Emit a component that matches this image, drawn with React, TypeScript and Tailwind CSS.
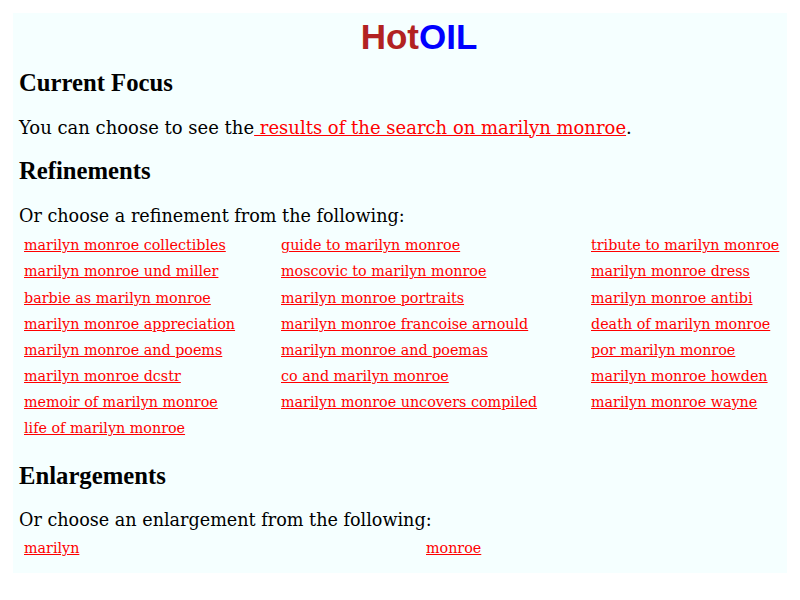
import React from "react";

const refinements: string[][] = [
  ["marilyn monroe collectibles", "guide to marilyn monroe", "tribute to marilyn monroe"],
  ["marilyn monroe und miller", "moscovic to marilyn monroe", "marilyn monroe dress"],
  ["barbie as marilyn monroe", "marilyn monroe portraits", "marilyn monroe antibi"],
  ["marilyn monroe appreciation", "marilyn monroe francoise arnould", "death of marilyn monroe"],
  ["marilyn monroe and poems", "marilyn monroe and poemas", "por marilyn monroe"],
  ["marilyn monroe dcstr", "co and marilyn monroe", "marilyn monroe howden"],
  ["memoir of marilyn monroe", "marilyn monroe uncovers compiled", "marilyn monroe wayne"],
  ["life of marilyn monroe", "", ""],
];

const serif = "font-['DejaVu_Serif',serif]";

function Heading({ children, className = "" }: { children: React.ReactNode; className?: string }) {
  return (
    <h2
      className={`h-[44px] flex items-center text-[24.7px] font-bold text-black font-['Liberation_Serif',serif] ${className}`}
    >
      {children}
    </h2>
  );
}

function RefLink({ label }: { label: string }) {
  if (!label) return <span />;
  return (
    <a href="#" className="text-[#ff0000] underline">
      {label}
    </a>
  );
}

export default function App() {
  return (
    <div className="bg-white min-h-[600px] p-[13px]">
      <div className="bg-[#f5ffff] h-[560px] px-[6px]">
        {/* Logo */}
        <div className="h-[48px] pt-[6px] pl-[38px] flex items-start justify-center">
          <h1 className="text-[35px] leading-none font-bold font-['Liberation_Sans',sans-serif]">
            <span className="text-[#b22222]">Hot</span>
            <span className="text-[#0000ff]">OIL</span>
          </h1>
        </div>

        {/* Current Focus */}
        <Heading>Current Focus</Heading>
        <p className={`${serif} text-[18px] h-[44px] flex items-center text-black`}>
          You can choose to see the
          <a href="#" className="text-[#ff0000] underline whitespace-pre"> results of the search on marilyn monroe</a>.
        </p>

        {/* Refinements */}
        <Heading>Refinements</Heading>
        <p className={`${serif} text-[17.6px] h-[30px] mt-[8px] flex items-center text-black`}>
          Or choose a refinement from the following:
        </p>
        <div className={`${serif} text-[14.3px] grid grid-cols-[257px_310px_1fr] pl-[5px] mt-[2px]`}>
          {refinements.map((row, i) => (
            <React.Fragment key={i}>
              {row.map((label, j) => (
                <div key={j} className="h-[26.15px] flex items-center">
                  <RefLink label={label} />
                </div>
              ))}
            </React.Fragment>
          ))}
        </div>

        {/* Enlargements */}
        <Heading className="mt-[11px]">Enlargements</Heading>
        <p className={`${serif} text-[17.6px] h-[30px] mt-[8px] flex items-center text-black`}>
          Or choose an enlargement from the following:
        </p>
        <div className={`${serif} text-[14.3px] grid grid-cols-[402px_1fr] pl-[5px] mt-[1px]`}>
          <div className="h-[26px] flex items-center">
            <RefLink label="marilyn" />
          </div>
          <div className="h-[26px] flex items-center">
            <RefLink label="monroe" />
          </div>
        </div>
      </div>
    </div>
  );
}
